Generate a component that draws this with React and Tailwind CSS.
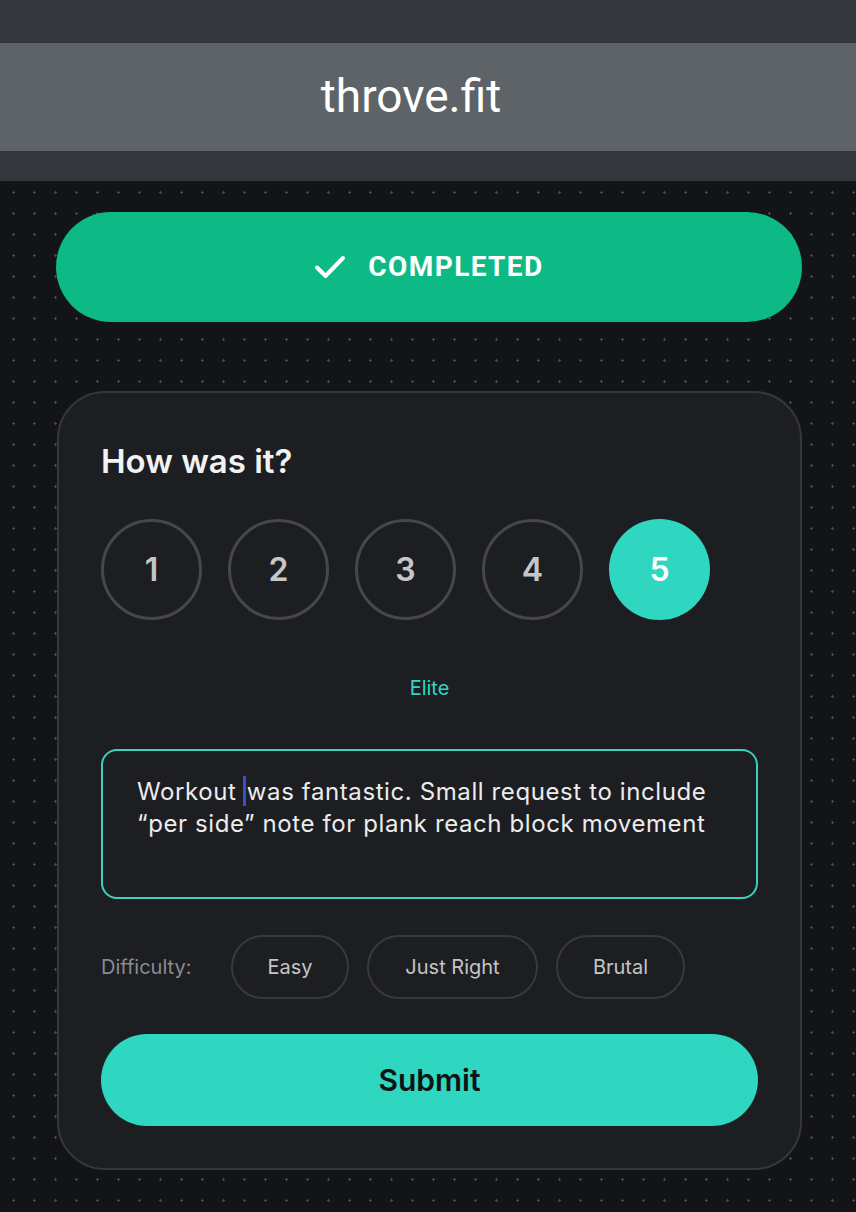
import React from "react";

function Check() {
  return (
    <svg width="32" height="26" viewBox="0 0 32 26" fill="none">
      <path d="M3 13.5 L11.5 22 L29 4" stroke="white" strokeWidth="4" strokeLinecap="round" strokeLinejoin="round" />
    </svg>
  );
}

export default function App() {
  const nums = [1, 2, 3, 4, 5];
  return (
    <div className="w-[856px] h-[1212px] overflow-hidden bg-[#131418] font-['Inter','Noto_Sans',sans-serif]">
      <header className="bg-[#33363a] pt-[43px] pb-[30px]">
        <div className="h-[108px] bg-[#5e6367] flex items-center justify-center pr-[34px]">
          <span className="font-['Roboto',sans-serif] text-[46px] text-white leading-none pb-[2px]">throve.fit</span>
        </div>
      </header>
      <main className="h-[1031px] bg-[#131418] bg-[radial-gradient(circle,#4a4c52_1px,transparent_1.2px)] bg-[size:21px_21px] bg-[position:3px_1px] pt-[31px] pl-[56px]">
        <button className="w-[746px] h-[110px] rounded-full bg-[#0db985] flex items-center justify-center gap-[22px]">
          <Check />
          <span className="font-['Roboto',sans-serif] font-bold text-[28px] tracking-[0.05em] text-white">COMPLETED</span>
        </button>

        <section className="mt-[69px] ml-[1px] w-[745px] rounded-[48px] border-2 border-[#35373b] bg-[#1d1e22] px-[42px] pt-[48px] pb-[42px]">
          <h2 className="text-[33px] font-semibold text-[#f2f2f2] leading-[40px]">How was it?</h2>
          <div className="mt-[38px] flex gap-[26px]">
            {nums.map((n) =>
              n === 5 ? (
                <div key={n} className="w-[101px] h-[101px] rounded-full bg-[#2fd6c0] flex items-center justify-center text-[32px] font-semibold text-white">
                  {n}
                </div>
              ) : (
                <div key={n} className="w-[101px] h-[101px] rounded-full border-[3px] border-[#45474b] flex items-center justify-center text-[32px] font-semibold text-[#c5c6c8]">
                  {n}
                </div>
              )
            )}
          </div>
          <div className="mt-[56px] text-center text-[20px] leading-[24px] text-[#2fd6c0]">Elite</div>

          <div className="mt-[49px] h-[150px] rounded-[16px] border-2 border-[#3ad2bd] pl-[34px] pr-[10px] pt-[25px] text-[24px] tracking-[0.6px] leading-[32px] text-[#ececec]">
            Workout <span className="inline-block w-[3px] h-[30px] bg-[#3d4fd1] align-middle -ml-[1px] mr-[1px] -mt-[4px]"></span>was fantastic. Small request to include
            <br />
            “per side” note for plank reach block movement
          </div>

          <div className="mt-[36px] flex items-center">
            <span className="text-[20px] text-[#8a8b8f] w-[130px]">Difficulty:</span>
            <div className="flex gap-[18px]">
              <span className="h-[64px] w-[118px] rounded-full border-2 border-[#37393d] flex items-center justify-center text-[20px] text-[#c4c4c6]">Easy</span>
              <span className="h-[64px] w-[171px] rounded-full border-2 border-[#37393d] flex items-center justify-center text-[20px] text-[#c4c4c6]">Just Right</span>
              <span className="h-[64px] w-[129px] rounded-full border-2 border-[#37393d] flex items-center justify-center text-[20px] text-[#c4c4c6]">Brutal</span>
            </div>
          </div>

          <button className="mt-[35px] w-full h-[92px] rounded-full bg-[#2fd6c0] flex items-center justify-center text-[30px] font-semibold text-[#111214]">
            Submit
          </button>
        </section>
      </main>
    </div>
  );
}
